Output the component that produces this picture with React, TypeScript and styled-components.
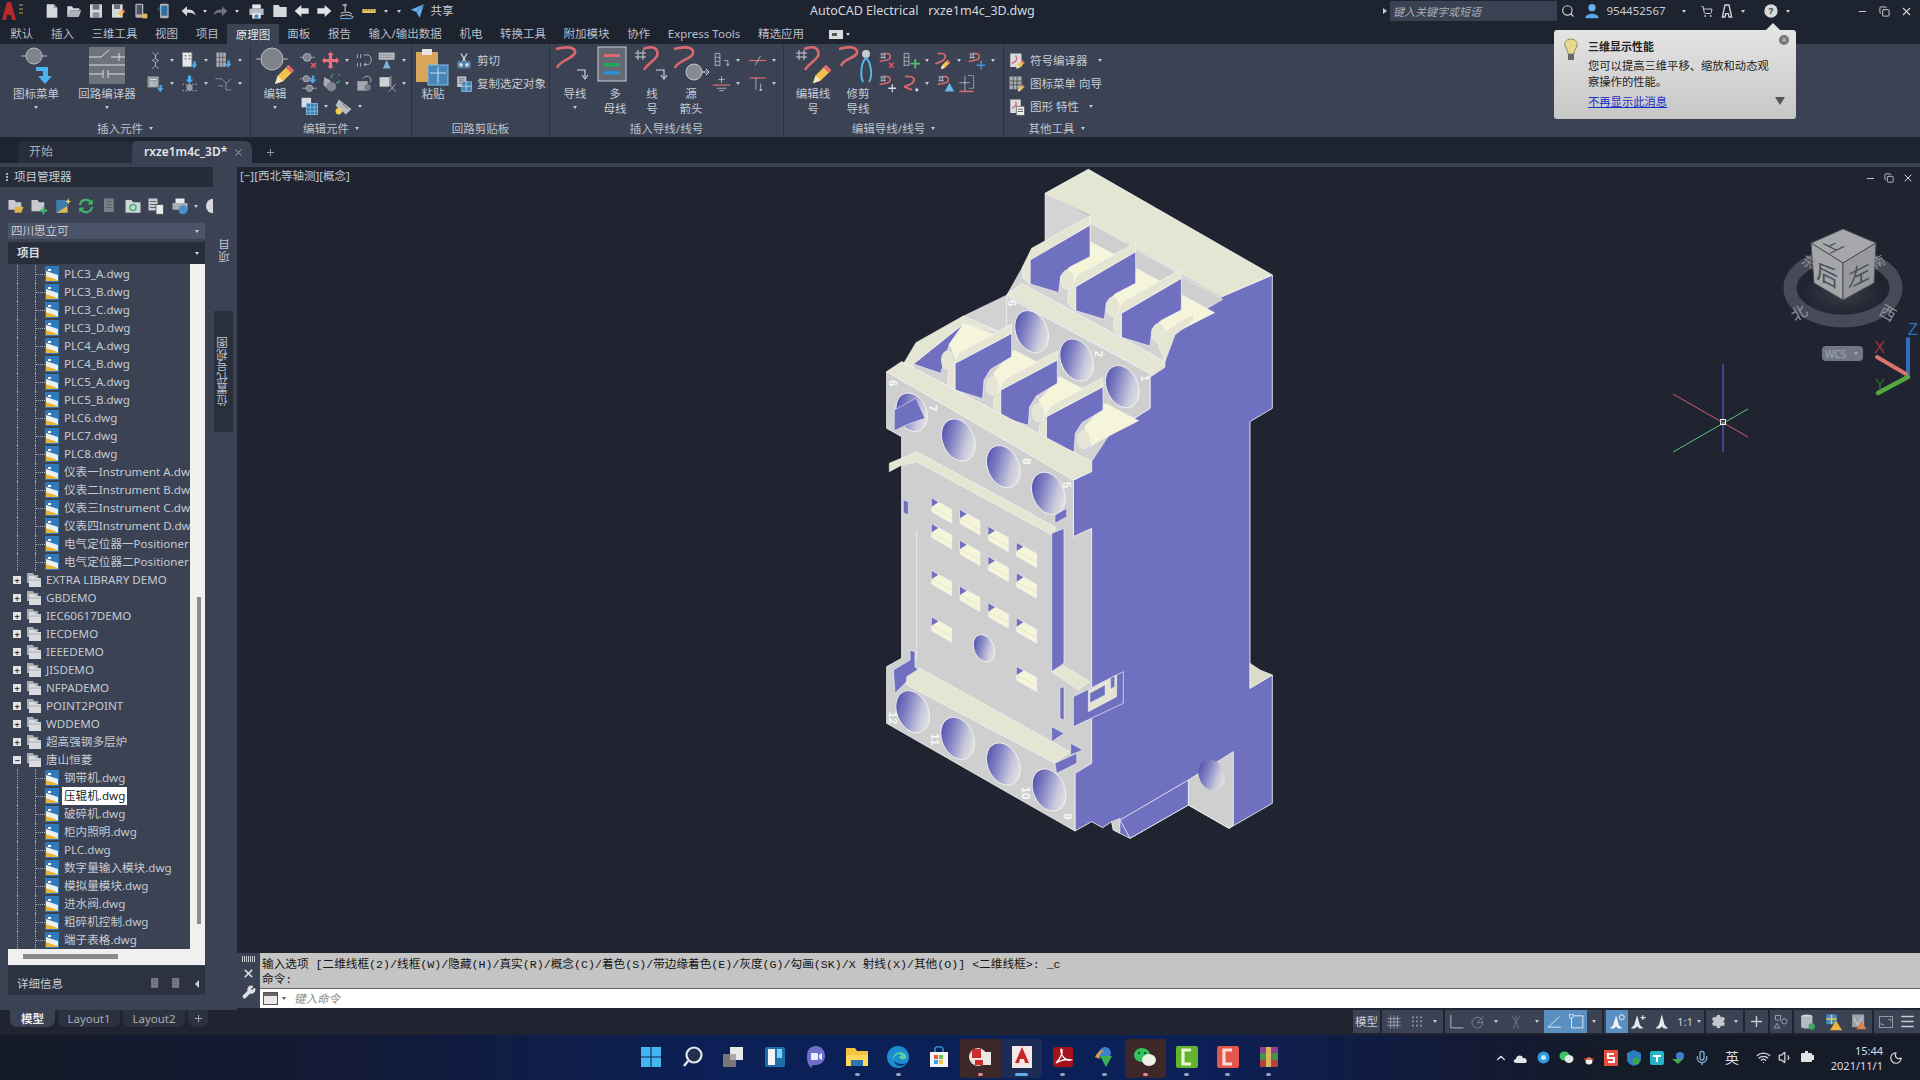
import React from "react";
import styled, { createGlobalStyle } from "styled-components";
import { Settings, Plus, Menu, Search, Wifi, Volume1, Mic, Moon, ChevronUp, Wrench, X as XIcon, Minus, Copy, ShoppingCart } from "lucide-react";

const SANS = `"Noto Sans","Noto Sans CJK SC",sans-serif`;

const Global = createGlobalStyle`
  html, body { margin: 0; padding: 0; width: 1920px; height: 1080px; overflow: hidden; background: #1f2430; }
  * { box-sizing: border-box; }
  #root { width: 1920px; height: 1080px; font-family: ${SANS}; }
`;

const Page = styled.div`display:flex;flex-direction:column;width:1920px;height:1080px;color:#c8ccd3;font-size:11.5px;line-height:1;`;

/* ---------- title bar ---------- */
const TitleBar = styled.header`display:flex;align-items:center;height:22px;background:#1e2330;flex:none;`;
const QuickBar = styled.div`display:flex;align-items:center;width:800px;padding-left:2px;`;
const Qa = styled.span<{ $w?: number }>`display:flex;align-items:center;justify-content:center;width:${p => p.$w ?? 22}px;height:20px;flex:none;`;
const AppTitle = styled.div`width:590px;padding-left:10px;font-size:12.5px;color:#d4d7dc;white-space:pre;`;
const SearchBox = styled.div`width:167px;height:20px;background:#3a4152;display:flex;align-items:center;padding-left:3px;font-size:11px;font-style:italic;color:#a9aeb8;`;
const TitleRight = styled.div`display:flex;align-items:center;flex:1;`;
const TitleItem = styled.span<{ $w: number }>`display:flex;align-items:center;justify-content:center;width:${p => p.$w}px;height:20px;flex:none;`;
const Caret = styled.i<{ $c?: string }>`display:inline-block;width:0;height:0;border-left:2.5px solid transparent;border-right:2.5px solid transparent;border-top:3px solid ${p => p.$c ?? "#c8ccd3"};flex:none;`;
const CaretRight = styled.i`display:block;width:0;height:0;border-top:3.5px solid transparent;border-bottom:3.5px solid transparent;border-left:4px solid #c8ccd3;flex:none;margin:0 3px 0 -7px;`;
const CaretLeft = styled.i`display:block;width:0;height:0;border-top:4px solid transparent;border-bottom:4px solid transparent;border-right:4px solid #d0d3d8;flex:none;margin-left:4px;`;

/* ---------- ribbon ---------- */
const TabRow = styled.nav`display:flex;height:22px;background:#1e2330;padding-left:1.5px;flex:none;align-items:flex-end;`;
const RTab = styled.div<{ $on?: boolean }>`height:${p => p.$on ? 20 : 22}px;display:flex;align-items:center;padding:${p => p.$on ? 1 : 2}px ${p => p.$on ? 8.3 : 8.8}px 0;white-space:nowrap;background:${p => p.$on ? "#3a4254" : "transparent"};color:${p => p.$on ? "#e4e6ea" : "#b9bec7"};`;
const MoreTab = styled(RTab)`padding-left:16px;gap:3px;`;
const Ribbon = styled.section`display:flex;height:93px;background:#3a4254;flex:none;`;
const RPanel = styled.div<{ $w: number; $last?: boolean }>`width:${p => p.$w}px;display:flex;flex-direction:column;flex:none;border-right:${p => p.$last ? "none" : "1px solid #2c3341"};`;
const RBody = styled.div`display:flex;height:76px;padding-top:3px;`;
const RLabel = styled.div`height:17px;display:flex;align-items:center;justify-content:center;gap:6px;font-size:11.5px;color:#bfc4cc;`;
const BigTool = styled.div<{ $w: number }>`width:${p => p.$w}px;flex:none;display:flex;flex-direction:column;align-items:center;line-height:15px;text-align:center;`;
const BigIcon = styled.div`height:38px;display:flex;align-items:center;justify-content:center;margin-bottom:1px;`;
const BigText = styled.div`color:#c8ccd3;font-size:11.5px;white-space:nowrap;`;
const BigCaret = styled.div`height:8px;display:flex;align-items:center;justify-content:center;margin-top:2px;`;
const SmallCol = styled.div<{ $pad?: number; $left?: number }>`display:flex;flex-direction:column;padding-top:${p => p.$pad ?? 0}px;margin-left:${p => p.$left ?? 0}px;`;
const SmallRow = styled.div`display:flex;align-items:center;height:23px;`;
const SmallTool = styled.div<{ $w: number }>`width:${p => p.$w}px;display:flex;align-items:center;justify-content:center;gap:5px;flex:none;`;
const TextTool = styled.div`display:flex;align-items:center;height:23px;gap:4px;white-space:nowrap;padding-left:4px;color:#c8ccd3;`;
const CaretGap = styled.span`width:2px;flex:none;`;

/* ---------- document tabs ---------- */
const DocBar = styled.div`display:flex;align-items:flex-end;height:26px;background:#1e2330;padding-left:18px;flex:none;`;
const DocTab = styled.div<{ $on?: boolean; $w: number }>`width:${p => p.$w}px;height:22px;display:flex;align-items:center;gap:6px;padding-left:${p => p.$on ? 12 : 11}px;border-radius:5px 8px 0 0;background:${p => p.$on ? "#3a4254" : "#272d3a"};color:${p => p.$on ? "#e4e6ea" : "#a8adb6"};font-size:12px;font-weight:${p => p.$on ? 600 : 400};`;
const DocPlus = styled.div`width:36px;height:22px;display:flex;align-items:center;justify-content:center;color:#9ea3ad;`;
const Band = styled.div`height:4px;background:#3a4254;flex:none;`;

/* ---------- main ---------- */
const Main = styled.main`display:flex;height:843px;flex:none;`;
const Side = styled.aside`width:237px;flex:none;background:#3a4254;display:flex;`;
const SideMain = styled.div`width:213px;display:flex;flex-direction:column;flex:none;`;
const SideHead = styled.div`height:20px;background:#272c39;display:flex;align-items:center;padding-left:6px;gap:6px;color:#c8ccd3;font-size:11.5px;`;
const HeadGrip = styled.i`display:block;width:2px;height:8px;background:repeating-linear-gradient(#a7abb4 0 2px,transparent 2px 3px);`;
const SideTools = styled.div`height:32px;display:flex;align-items:center;padding:6px 0 0 7px;gap:5.4px;overflow:hidden;`;
const Project = styled.div`margin:4px 8px 3px;height:16px;background:#4b5469;display:flex;align-items:center;justify-content:space-between;padding:0 6px 0 3px;color:#c8ccd3;font-size:11.5px;`;
const TreeHead = styled.div`margin:0 8px;height:22px;background:#282d3a;display:flex;align-items:center;justify-content:space-between;padding:0 6px 0 9px;font-weight:600;color:#d8dbe0;`;
const TreeWrap = styled.div`margin:0 8px;display:grid;grid-template-columns:182px 15px;grid-template-rows:685px 16px;background:#f0f0f0;height:701px;`;
const TreeBody = styled.div`background:#3a4254;overflow:hidden;padding-top:1px;`;
const VTrack = styled.div`padding:333px 0 0 7px;`;
const VThumb = styled.div`width:4px;height:327px;background:#8a8a8a;`;
const HTrack = styled.div`grid-column:1 / span 2;padding:5px 0 0 15px;`;
const HThumb = styled.div`width:95px;height:5px;background:#8a8a8a;`;
const Row = styled.div`display:flex;align-items:center;height:18px;white-space:nowrap;overflow:hidden;font-size:11.6px;color:#c6cad1;`;
const GuideA = styled.span`width:18px;height:18px;margin-left:9px;border-left:1px dotted #a7abb4;flex:none;`;
const GuideB = styled.span`width:10px;height:18px;border-left:1px dotted #a7abb4;flex:none;background:repeating-linear-gradient(90deg,#a7abb4 0 1px,transparent 1px 2px) 0 9px / 100% 1px no-repeat;`;
const PlusBox = styled.span`width:8px;height:8px;margin-left:5px;margin-right:5px;background:#e2e4e8;color:#30364a;flex:none;display:flex;align-items:center;justify-content:center;font-size:9px;font-weight:700;line-height:1;`;
const FileName = styled.span<{ $sel?: boolean }>`margin-left:${p => p.$sel ? 3 : 5}px;padding:${p => p.$sel ? "3px 2px" : 0};background:${p => p.$sel ? "#fff" : "transparent"};color:${p => p.$sel ? "#1a1a1a" : "inherit"};`;
const FolderName = styled.span`margin-left:4px;`;
const Details = styled.div`margin:1px 8px 0;height:29px;background:#2c3240;display:flex;align-items:center;padding:6px 6px 0 9px;justify-content:space-between;`;
const DetailIcons = styled.div`display:flex;align-items:center;gap:8px;`;
const SideRail = styled.div`width:24px;display:flex;flex-direction:column;align-items:center;padding-top:72px;`;
const VText = styled.div`writing-mode:vertical-rl;transform:rotate(180deg);font-size:11.5px;color:#bfc4cc;`;
const RailTab = styled.div`margin-top:49px;width:19px;height:121px;background:#2a2f3c;display:flex;align-items:center;justify-content:center;margin-right:4px;`;

const View = styled.div`flex:1;display:flex;flex-direction:column;min-width:0;`;
const Canvas = styled.div`height:781px;background:#1f2430;position:relative;overflow:hidden;flex:none;`;
const ViewLabel = styled.div`position:absolute;left:3px;top:3px;font-size:11.5px;color:#c3c7ce;`;
const ViewCtl = styled.div`position:absolute;right:6px;top:5px;display:flex;gap:8px;align-items:center;color:#cfd2d8;`;
const ModelSvg = styled.svg`position:absolute;left:623px;top:-7px;`;
const OverlaySvg = styled.svg`position:absolute;left:1403px;top:33px;`;
const Wcs = styled.div`position:absolute;left:1585px;top:179px;width:41px;height:15px;border-radius:4px;background:#727784;color:#a4a8b2;font-size:10px;display:flex;align-items:center;justify-content:space-between;padding:0 5px 0 3px;`;

const Cmd = styled.div`height:62px;background:#1f2430;padding-top:5px;display:flex;flex:none;`;
const CmdRail = styled.div`width:23px;background:#3a4254;display:flex;flex-direction:column;align-items:center;gap:5px;padding-top:3px;height:55px;`;
const Grip = styled.div`width:14px;height:6px;background:repeating-linear-gradient(90deg,#c8ccd3 0 1px,transparent 1px 2px);`;
const CmdMain = styled.div`flex:1;height:55px;display:flex;flex-direction:column;`;
const CmdHist = styled.div`height:36px;background:#c4c4c4;color:#151515;font-family:"Liberation Mono","Noto Sans CJK SC",monospace;font-size:11.65px;line-height:15px;padding:4px 0 0 2px;white-space:pre;border-bottom:1px solid #666;`;
const CmdInput = styled.div`height:19px;background:#fff;display:flex;align-items:center;gap:4px;padding-left:3px;font-style:italic;color:#8c8c8c;font-size:11.5px;`;
const CmdHint = styled.span`margin-left:4px;`;

/* ---------- status ---------- */
const Status = styled.footer`height:25px;flex:none;background:#1f2430;display:flex;padding-left:10px;align-items:flex-start;`;
const LTab = styled.div<{ $w: number; $on?: boolean }>`width:${p => p.$w}px;margin-right:3px;height:17px;display:flex;align-items:center;justify-content:center;border-radius:0 0 7px 7px;background:${p => p.$on ? "#3a4254" : "#2b313f"};color:${p => p.$on ? "#e6e8eb" : "#a8adb6"};font-weight:${p => p.$on ? 600 : 400};`;
const StatusTools = styled.div`margin-left:auto;display:flex;gap:2px;height:23px;`;
const SGroup = styled.div<{ $w: number; $flow?: boolean }>`width:${p => p.$w}px;background:#3a4254;display:flex;align-items:center;justify-content:${p => p.$flow ? "flex-start" : "space-around"};padding:0 ${p => p.$flow ? 0 : 1}px;color:#c8ccd3;flex:none;`;
const SBtn = styled.span<{ $on?: boolean; $w?: number }>`width:${p => p.$w ?? 21}px;height:23px;display:flex;align-items:center;justify-content:center;background:${p => p.$on ? "#5a8fc2" : "transparent"};flex:none;`;

/* ---------- taskbar ---------- */
const Taskbar = styled.div`height:45px;flex:none;display:grid;grid-template-columns:1fr 659px 1fr;background:linear-gradient(90deg,#141a28 0%,#121a36 18%,#0c2058 38%,#0c2058 62%,#121a36 76%,#161b28 84%);`;
const TaskItems = styled.div`display:flex;`;
const TaskItem = styled.div<{ $tone?: string }>`width:41.2px;display:flex;flex-direction:column;align-items:center;background:${p => p.$tone ?? "transparent"};margin-top:4px;height:39px;border-radius:3px;padding-top:6px;`;
const TaskDot = styled.i<{ $c?: string; $w?: number }>`display:block;width:${p => p.$w ?? 5}px;height:3px;border-radius:2px;background:${p => p.$c ?? "#93a2b8"};margin-top:4px;`;
const Tray = styled.div`display:flex;align-items:center;justify-content:flex-end;padding-right:15px;color:#d9dce2;`;
const TrayItem = styled.span<{ $w?: number; $big?: boolean }>`width:${p => p.$w ?? 22.6}px;display:flex;justify-content:center;align-items:center;font-size:${p => p.$big ? 14 : 11.5}px;`;
const Clock = styled.div`display:flex;flex-direction:column;align-items:flex-end;font-size:11px;gap:4px;width:64px;margin-right:4px;`;

/* ---------- popup ---------- */
const Popup = styled.div`position:absolute;left:1554px;top:30px;width:242px;height:89px;background:linear-gradient(#e4e4e4,#c6c6c6);border-radius:3px;color:#222;padding:11px 0 0 34px;font-size:11.3px;z-index:5;
  &::before{content:"";position:absolute;left:212px;top:-7px;border-left:7px solid transparent;border-right:7px solid transparent;border-bottom:7px solid #e4e4e4;}`;
const PopTitle = styled.div`font-size:11px;font-weight:600;margin-bottom:6px;`;
const PopText = styled.div`line-height:15.5px;width:184px;`;
const PopLink = styled.div`color:#1a30c8;text-decoration:underline;margin-top:7px;`;
const PopBulb = styled.svg`position:absolute;left:10px;top:8px;`;
const PopClose = styled.span`position:absolute;right:7px;top:5px;width:10px;height:10px;border-radius:50%;background:#777;color:#ddd;font-size:8px;display:flex;align-items:center;justify-content:center;`;
const PopMore = styled.span`position:absolute;right:11px;bottom:14px;border-left:5px solid transparent;border-right:5px solid transparent;border-top:8px solid #555;`;

/* ---------- icons ---------- */
const pink = "#d8696f";
const Comp = ({ cx = 14, cy = 12, r = 9 }: any) => (<g><path d={`M${cx - r - 5} ${cy}H${cx + r + 5}`} stroke="#b8bcc2" strokeWidth="1" /><circle cx={cx} cy={cy} r={r} fill="#7f838c" stroke="#b9bcc2" strokeWidth="1" /></g>);
const WireP = ({ d = "M4 20 C5 12 22 14 20 6 C19 1 10 2 3 4" }: any) => <path d={d} fill="none" stroke={pink} strokeWidth="2.6" />;
const Pencil = ({ x = 0, y = 0, s = 1 }: any) => (<g transform={`translate(${x} ${y}) scale(${s})`}><path d="M0 14 L2 8 L10 0 L14 4 L6 12Z" fill="#f2c14e" /><path d="M10 0 L14 4 L12 6 L8 2Z" fill="#e3656a" /><path d="M0 14 L2 8 L6 12Z" fill="#f3e6c2" /></g>);
const W = "#c2c6cd";

const glyphs: Record<string, React.ReactNode> = {
  menuBig: <g><Comp cx={18} cy={10} r={8} /><path d="M20 21H32V30H36L29 38 22 30H27V25H20Z" fill="#4db3ef" /></g>,
  circuit: <g><rect x="2" y="1" width="36" height="37" fill="#6f737b" /><path d="M2 19H38M2 11H14L22 4M24 11H38M32 7V15M2 28H16M16 24V32M21 24V32M21 28H38" stroke="#dcdde0" strokeWidth="1" fill="none" /></g>,
  editBig: <g><Comp cx={17} cy={13} r={11} /><Pencil x={20} y={19} s={1.35} /></g>,
  clip: <g><rect x="3" y="6" width="22" height="30" fill="#d9a55b" /><rect x="9" y="3" width="10" height="6" fill="#e5e5e5" /><rect x="15" y="19" width="20" height="20" fill="#4a86b5" stroke="#7cc0ee" /><path d="M17 27H33M25 21V37" stroke="#bfe2f8" /></g>,
  wire: <g><WireP d="M2 22 C4 14 22 12 20 5 C18 0 8 1 1 3" /><path d="M22 24H30V31M27 29L30 33 33 29" stroke="#d8dbe0" fill="none" strokeWidth="1.1" /></g>,
  bus: <g><rect x="3" y="1" width="28" height="34" fill="#646973" stroke="#c8ccd3" /><rect x="9" y="8" width="16" height="3" fill={pink} /><rect x="9" y="17" width="16" height="3.5" fill="#27a559" /><rect x="9" y="25" width="16" height="3.5" fill="#2f8ed6" /></g>,
  wireNo: <g><path d="M6 4V14M11 4V14M3 7H14M3 11H14" stroke="#c8ccd3" /><WireP d="M12 24 C16 16 28 13 25 5 C23 0 16 1 11 3" /><path d="M24 24H32V31M29 29L32 33 35 29" stroke="#d8dbe0" fill="none" strokeWidth="1.1" /></g>,
  source: <g><WireP d="M4 22 C6 14 24 13 22 5 C20 0 10 1 3 3" /><circle cx="23" cy="26" r="8" fill="#868a92" stroke="#c6c9ce" /><path d="M31 26H36M35 23L38 26 35 29" stroke="#e6e8eb" fill="none" /></g>,
  editWire: <g><path d="M6 4V14M11 4V14M3 7H14M3 11H14" stroke="#c8ccd3" /><WireP d="M12 24 C16 16 28 13 25 5 C23 0 16 1 11 3" /><Pencil x={20} y={19} s={1.3} /></g>,
  trim: <g><WireP d="M3 20 C5 12 21 12 19 5 C17 0 8 1 1 3" /><circle cx="28" cy="8" r="4" fill="#c9ccd1" /><path d="M28 12C23 16 22 30 25 36M28 12C33 16 35 30 31 36" stroke="#5bb4ea" strokeWidth="2" fill="none" /></g>,
  /* small */
  coil: <g><path d="M8 2C16 6 8 9 16 12 8 15 16 18 8 22M16 2C8 6 16 9 8 12 16 15 8 18 16 22" stroke={W} fill="none" /></g>,
  panelB: <g><rect x="3" y="2" width="12" height="18" fill="#e5e6e8" stroke="#888" /><path d="M6 6H8M11 6H13M6 10H8M11 10H13" stroke="#333" /><path d="M17 13H20V17H22L18 22 14 17H17Z" fill="#4da9e8" /></g>,
  blockB: <g><rect x="3" y="2" width="12" height="18" fill="#a8abb2" /><path d="M7 2V20M11 2V20M3 8H15M3 14H15" stroke="#444" strokeWidth=".8" /><path d="M17 12H20V16H22L18 21 14 16H17Z" fill="#4da9e8" /></g>,
  tableB: <g><rect x="2" y="3" width="14" height="14" fill="#9aa0a8" /><path d="M5 7H13M5 11H9M11 11H14M5 14H13" stroke="#eee" /><path d="M17 14H20V18H22L18 23 14 18H17Z" fill="#4da9e8" /></g>,
  nodeB: <g><path d="M10 2H14V7H17L12 12 7 7H10Z" fill="#4da9e8" /><circle cx="12" cy="17" r="4" fill="#9a9da4" /><path d="M3 13H21M3 21H21" stroke={W} strokeDasharray="2 2" /></g>,
  branch: <g><path d="M2 6H10L15 12V20H22M15 12L22 6M6 15H11" stroke={W} fill="none" strokeDasharray="2 1" /></g>,
  compX: <g><Comp cx={9} cy={8} r={5} /><path d="M14 15L20 21M20 15L14 21" stroke="#d8565c" strokeWidth="2.2" /></g>,
  move: <g><path d="M12 1L16 5H14V10H19V8L23 12 19 16V14H14V19H16L12 23 8 19H10V14H5V16L1 12 5 8V10H10V5H8Z" fill="#e9707a" /></g>,
  swap: <g><path d="M3 4V9M7 4V9M3 15V20M7 15V20M11 5H16C22 5 22 17 16 17H12M14 15L11 17 14 19" stroke={W} fill="none" /></g>,
  cone: <g><rect x="1" y="2" width="20" height="9" fill="#bcbfc5" /><path d="M3 5H19M3 8H19" stroke="#555" strokeDasharray="2 1" /><path d="M11 11L16 22H6Z" fill="#79aed6" /></g>,
  nodes: <g><Comp cx={8} cy={6} r={4} /><path d="M15 2H18V7H21L16 12 11 7H15Z" fill="#4da9e8" /><Comp cx={12} cy={18} r={4} /></g>,
  rotate: <g><path d="M4 4L12 8 10 20 3 14Z" fill="#a9adb4" /><circle cx="13" cy="16" r="6" fill="#82868e" /><path d="M13 5A6 6 0 1 1 19 11" stroke="#3cb46a" fill="none" strokeWidth="1.6" /></g>,
  arcTool: <g><rect x="3" y="9" width="13" height="12" fill="#a4a7ae" /><circle cx="16" cy="17" r="4" fill="#787c84" /><path d="M10 6C13 1 21 2 20 9L19 11" stroke={W} fill="none" /></g>,
  cubeX: <g><path d="M2 4H14V16H2Z" fill="#cfd1d5" /><path d="M14 4L17 2V13L14 16Z" fill="#8c9097" /><path d="M14 13L22 22M22 13L14 22" stroke="#c8ccd3" /></g>,
  tableBlue: <g><rect x="2" y="1" width="12" height="12" fill="#d9dbde" /><rect x="8" y="8" width="14" height="14" fill="#3f7fae" stroke="#82c3ee" /><path d="M8 13H22M8 18H22M13 8V22M18 8V22" stroke="#a4d5f5" strokeWidth=".7" /></g>,
  tag: <g><path d="M6 3L22 15 15 22 2 11Z" fill="#b9bcc2" /><circle cx="6" cy="18" r="4" fill="#f1cd55" /><path d="M10 8L18 15" stroke="#555" /></g>,
  scissors: <g><path d="M8 2L14 12M16 2L10 12" stroke="#e6e8eb" strokeWidth="1.5" /><rect x="3" y="12" width="18" height="10" rx="2" fill="#4f7fa6" /><circle cx="8" cy="17" r="2.5" fill="#d9dbde" /><circle cx="16" cy="17" r="2.5" fill="#d9dbde" /></g>,
  copySel: <g><rect x="3" y="2" width="12" height="14" fill="#c5c8cd" /><path d="M5 5H13M5 8H13M5 11H13" stroke="#444" /><rect x="9" y="9" width="13" height="13" fill="#4a86b5" stroke="#8ac8f0" /><path d="M9 15H22M15 9V22" stroke="#bfe2f8" /></g>,
  lineCol: <g><path d="M4 3V19M10 3V19M4 3H10M4 8H10M4 13H10M4 18H10" stroke={W} fill="none" /><path d="M15 12H20V18M18 16L20 19 22 16" stroke={W} fill="none" /></g>,
  gapWire: <g><path d="M1 12H23" stroke={pink} strokeWidth="1.6" /><path d="M9 18L16 6" stroke={W} /></g>,
  earth: <g><path d="M12 3V11M8 7H16" stroke={W} /><path d="M1 14H23" stroke={pink} strokeWidth="1.6" /><path d="M6 18H18M9 21H15" stroke={W} /></g>,
  tee: <g><path d="M2 5H22" stroke={pink} strokeWidth="1.6" /><path d="M10 5V20M16 12V18" stroke={W} /><circle cx="16" cy="20" r="1.6" fill={W} /></g>,
  noX: <g><path d="M3 4H10M3 8H10M5 2V10M8 2V10" stroke={W} /><path d="M2 13C8 12 18 12 15 5 14 3 12 3 9 3" stroke={pink} strokeWidth="2" fill="none" /><path d="M14 15L20 21M20 15L14 21" stroke="#d8565c" strokeWidth="2" /></g>,
  lineAdd: <g><path d="M4 3V19M10 3V19M4 3H10M4 8H10M4 13H10M4 18H10" stroke={W} fill="none" /><path d="M18 10V22M12 16H24" stroke="#4fc06a" strokeWidth="2.4" /></g>,
  wirePen: <g><path d="M3 16C9 14 17 12 15 5 14 3 10 3 6 3" stroke={pink} strokeWidth="2.2" fill="none" /><Pencil x={10} y={11} s={.85} /></g>,
  noBlue: <g><path d="M3 4H10M3 8H10M5 2V10M8 2V10" stroke={W} /><path d="M2 13C8 12 18 12 15 5 14 3 12 3 9 3" stroke={pink} strokeWidth="2" fill="none" /><path d="M18 12V23M12 18H23" stroke="#4b90d0" strokeWidth="2" /></g>,
  noPlus: <g><path d="M3 4H10M3 8H10M5 2V10M8 2V10" stroke={W} /><path d="M2 13C8 12 18 12 15 5 14 3 12 3 9 3" stroke={pink} strokeWidth="2" fill="none" /><path d="M18 13V23M13 18H23" stroke="#d8dbe0" strokeWidth="1.6" /></g>,
  wireDot: <g><path d="M4 16C10 14 18 12 16 5 15 3 11 3 5 3" stroke={pink} strokeWidth="2.4" fill="none" /><path d="M4 16L14 20" stroke={pink} strokeWidth="2.4" /><circle cx="20" cy="20" r="2" fill="#d8dbe0" /></g>,
  noTri: <g><path d="M3 4H10M3 8H10M5 2V10M8 2V10" stroke={W} /><path d="M2 13C8 12 18 12 15 5 14 3 12 3 9 3" stroke={pink} strokeWidth="2" fill="none" /><path d="M17 11L23 22H11Z" fill="#6bb5e3" /></g>,
  ladder: <g><path d="M3 22H21" stroke={pink} strokeWidth="2" /><path d="M14 2H21V18H14" stroke="#d8dbe0" fill="none" strokeDasharray="2 1" /><path d="M10 2V22M3 11H16" stroke={W} /></g>,
  symEdit: <g><rect x="3" y="2" width="15" height="18" fill="#d8dadd" /><path d="M5 15C10 13 14 10 10 5" stroke={pink} strokeWidth="1.8" fill="none" /><Pencil x={11} y={11} s={.8} /></g>,
  wizard: <g><rect x="2" y="2" width="16" height="17" fill="#a9acb3" /><path d="M7 2V19M12 2V19M2 8H18M2 13H18" stroke="#333" strokeWidth=".9" /><Pencil x={13} y={13} s={.65} /></g>,
  props: <g><rect x="3" y="2" width="14" height="18" fill="#dcdde0" /><path d="M5 14C9 12 13 9 10 5" stroke={pink} strokeWidth="1.8" fill="none" /><rect x="11" y="11" width="11" height="12" fill="#f1f1f1" stroke="#555" /><path d="M13 15H20M13 18H20" stroke="#333" /></g>,
  /* title */
  newf: <g><path d="M4 2H15L20 7V22H4Z" fill="#d4d7dc" /><path d="M15 2V7H20" fill="#8b8f97" /></g>,
  open: <g><path d="M2 5H9L11 8H20V11H7L3 21H2Z" fill="#d4d7dc" /><path d="M7 11H23L19 21H3Z" fill="#aeb2b9" /></g>,
  save: <g><path d="M3 2H21V22H3Z" fill="#d4d7dc" /><rect x="7" y="2" width="10" height="8" fill="#6b7079" /><rect x="7" y="14" width="10" height="8" fill="#8b8f97" /></g>,
  saveas: <g><path d="M3 2H19V22H3Z" fill="#d4d7dc" /><rect x="6" y="2" width="9" height="7" fill="#6b7079" /><Pencil x={10} y={9} s={.9} /></g>,
  phone1: <g><rect x="5" y="1" width="12" height="21" rx="2" fill="#aeb2b9" /><rect x="7" y="3" width="8" height="14" fill="#4b5262" /><path d="M15 16H23V23H15Z" fill="#e3b34d" /></g>,
  phone2: <g><rect x="6" y="1" width="13" height="22" rx="2" fill="#aeb2b9" /><rect x="8" y="4" width="9" height="15" fill="#2d6f9e" /><path d="M2 9H8M5 6L8 9 5 12" stroke="#4da9e8" fill="none" /></g>,
  undo: <path d="M9 5V10C15 9 21 12 22 19 19 15 15 14 9 15V20L1 12Z" fill="#d4d7dc" />,
  redo: <path d="M15 5V10C9 9 3 12 2 19 5 15 9 14 15 15V20L23 12Z" fill="#6d727c" />,
  print: <g><rect x="6" y="2" width="12" height="6" fill="#e6e8eb" /><rect x="2" y="8" width="20" height="9" fill="#b6bac1" /><rect x="6" y="14" width="12" height="8" fill="#e6e8eb" /><circle cx="12" cy="19" r="3" fill="#4a8fc6" /></g>,
  folder: <path d="M2 3H10L12 6H22V21H2Z" fill="#d4d7dc" />,
  left: <path d="M11 3V8H22V16H11V21L1 12Z" fill="#e0e2e6" />,
  right: <path d="M13 3V8H2V16H13V21L23 12Z" fill="#e0e2e6" />,
  snake: <g><path d="M10 1V12M6 3H13M4 15C8 12 16 12 20 16M3 19C8 16 16 16 22 20" stroke="#d4d7dc" fill="none" strokeWidth="1.4" /><path d="M3 22H21" stroke="#5db6ea" strokeWidth="1.4" /></g>,
  ruler: <g><rect x="2" y="9" width="20" height="6" fill="#e8c65f" /><path d="M6 9V12M10 9V12M14 9V12M18 9V12" stroke="#444" /></g>,
  send: <path d="M23 1L16 23 11 14 2 10ZM23 1L11 14" fill="#5fb3ee" stroke="#1e2330" strokeWidth=".7" />,
  user: <g><circle cx="12" cy="7" r="5.5" fill="#6ab0ea" /><path d="M2 23C2 14 22 14 22 23Z" fill="#5da5e4" /></g>,
  aLogo: <g><path d="M9 3L15 3 19 21H15L14 16H10L9 21H5Z" fill="none" stroke="#d4d7dc" strokeWidth="2" /></g>,
  help: <g><circle cx="12" cy="12" r="10" fill="#d6d8dc" /><text x="12" y="16.5" textAnchor="middle" fontSize="13" fontWeight="700" fill="#333" fontFamily="Liberation Sans">?</text></g>,
  /* panel */
  pFolderOpen: <g><path d="M2 4H10L12 7H19V17H2Z" fill="#c7cad0" /><path d="M10 13H22L19 21H10Z" fill="#e3b34d" /></g>,
  pFolderAdd: <g><path d="M2 4H10L12 7H19V19H2Z" fill="#c7cad0" /><path d="M18 13V23M13 18H23" stroke="#43b86b" strokeWidth="2.4" /></g>,
  pStar: <g><rect x="3" y="4" width="15" height="17" fill="#3f7fae" /><path d="M3 21L18 12V21Z" fill="#e3b34d" /><path d="M19 1L20 5 23 6 20 7 19 11 18 7 15 6 18 5Z" fill="#f5d76a" /></g>,
  pRefresh: <g><path d="M4 11A8 8 0 0 1 19 8M20 13A8 8 0 0 1 5 16" stroke="#3fb56c" strokeWidth="3" fill="none" /><path d="M21 3V10H14Z M3 21V14H10Z" fill="#3fb56c" /></g>,
  pDoc: <g><rect x="4" y="2" width="13" height="18" fill="#7a7e87" /><path d="M7 6H14M7 10H14M7 14H14" stroke="#50545c" /></g>,
  pFolderRef: <g><path d="M2 4H10L12 7H22V21H2Z" fill="#d0d3d8" /><circle cx="12" cy="14" r="4" fill="none" stroke="#3fb56c" strokeWidth="2" /></g>,
  pDocs: <g><rect x="2" y="2" width="12" height="16" fill="#c7cad0" /><path d="M4 6H12M4 10H12M4 14H12" stroke="#444" /><rect x="12" y="10" width="10" height="13" fill="#e9eaec" stroke="#444" /></g>,
  pPrint: <g><rect x="6" y="2" width="12" height="6" fill="#e6e8eb" /><rect x="2" y="8" width="20" height="9" fill="#a9adb4" /><circle cx="16" cy="17" r="6" fill="#4a8fc6" /></g>,
  warn: <g><rect x="3" y="2" width="14" height="13" fill="#3f8ac6" /><path d="M3 8H17M10 2V15" stroke="#e8c65f" strokeWidth="2" /><path d="M16 10L24 23H8Z" fill="#efb43c" /></g>,
  chart: <g><rect x="3" y="2" width="17" height="18" fill="#9da1a9" /><path d="M5 6L11 17 17 6" stroke="#e6e8eb" fill="none" /><path d="M16 11L23 23H9Z" fill="#d9824e" /></g>,
  symsIcon: <g><rect x="4" y="2" width="7" height="7" fill="none" stroke={W} /><circle cx="17" cy="11" r="4" fill="none" stroke={W} /><path d="M6 14L10 21H2Z" fill="none" stroke={W} /></g>,
  expand: <g><rect x="2" y="4" width="20" height="16" fill="none" stroke={W} /><path d="M5 16H9M5 16V13M19 8H15M19 8V11" stroke={W} /></g>,
  ortho: <path d="M4 3V21H22" stroke={W} fill="none" strokeWidth="1.2" />,
  polar: <g><circle cx="11" cy="13" r="8" fill="none" stroke="#9a9ea6" /><path d="M11 13L20 3M11 13H19" stroke="#9a9ea6" /></g>,
  snap: <path d="M12 2L12 9M6 3L12 12 8 22M18 3L12 12 16 22" stroke="#888c94" fill="none" />,
  iso: <path d="M3 20H21M3 20L19 5" stroke="#e6edf5" fill="none" strokeWidth="1.3" />,
  square: <g><rect x="5" y="4" width="16" height="17" fill="none" stroke="#e6edf5" strokeWidth="1.3" /><rect x="2" y="2" width="5" height="5" fill="#5a8fc2" stroke="#e6edf5" /></g>,
  anno: <path d="M11 2L15 17 20 22H14L11 19 8 22H2L7 17Z" fill="#e6e8eb" />,
  anno1: <g><path d="M10 3L14 17 19 22H13L10 19 7 22H1L6 17Z" fill="#eef1f4" /><circle cx="18" cy="6" r="3.5" fill="none" stroke="#eef1f4" strokeWidth="1.4" /></g>,
  anno2: <g><path d="M10 3L14 17 19 22H13L10 19 7 22H1L6 17Z" fill="#e6e8eb" /><path d="M18 3V10M15 6.5H22" stroke="#e6e8eb" strokeWidth="1.6" /></g>,
  dbOk: <g><ellipse cx="11" cy="5" rx="8" ry="3" fill="#d4d7dc" /><path d="M3 5V19C3 23 19 23 19 19V5" fill="#b5b9c0" /><circle cx="18" cy="19" r="4.5" fill="#3fa760" /></g>,
  halfDisc: <circle cx="14" cy="12" r="11" fill="#d6d8dc" />,
  gridLines: <path d="M7 2V22M12 2V22M17 2V22M2 7H22M2 12H22M2 17H22" stroke="#c2c6cd" fill="none" />,
  gridDots: <path d="M4 4H6M11 4H13M18 4H20M4 11H6M11 11H13M18 11H20M4 18H6M11 18H13M18 18H20" stroke="#c2c6cd" strokeWidth="3" fill="none" />,
};
const Ico = ({ k, s = 20, box = 24 }: { k: string; s?: number; box?: number }) => (
  <svg width={s} height={s} viewBox={`0 0 ${box} ${box}`} style={{ flex: "none", display: "block" }}>{glyphs[k]}</svg>
);

const Sm = ({ k, w, caret }: { k: string; w: number; caret?: boolean }) => (
  <SmallTool $w={w}><Ico k={k} s={19} />{caret && <Caret />}</SmallTool>
);
const Big = ({ k, w, lines, caret, box = 40, s = 40 }: { k: string; w: number; lines: string[]; caret?: boolean; box?: number; s?: number }) => (
  <BigTool $w={w}>
    <BigIcon><Ico k={k} s={s} box={box} /></BigIcon>
    {lines.map(l => <BigText key={l}>{l}</BigText>)}
    {caret && <BigCaret><Caret /></BigCaret>}
  </BigTool>
);

const tabs = ["默认", "插入", "三维工具", "视图", "项目", "原理图", "面板", "报告", "输入/输出数据", "机电", "转换工具", "附加模块", "协作", "Express Tools", "精选应用"];

const files1 = ["PLC3_A.dwg", "PLC3_B.dwg", "PLC3_C.dwg", "PLC3_D.dwg", "PLC4_A.dwg", "PLC4_B.dwg", "PLC5_A.dwg", "PLC5_B.dwg", "PLC6.dwg", "PLC7.dwg", "PLC8.dwg", "仪表一Instrument A.dwg", "仪表二Instrument B.dwg", "仪表三Instrument C.dwg", "仪表四Instrument D.dwg", "电气定位器一Positioner", "电气定位器二Positioner"];
const folders = ["EXTRA LIBRARY DEMO", "GBDEMO", "IEC60617DEMO", "IECDEMO", "IEEEDEMO", "JISDEMO", "NFPADEMO", "POINT2POINT", "WDDEMO", "超高强钢多层炉", "唐山恒菱"];
const files2 = ["钢带机.dwg", "压辊机.dwg", "破碎机.dwg", "柜内照明.dwg", "PLC.dwg", "数字量输入模块.dwg", "模拟量模块.dwg", "进水阀.dwg", "粗碎机控制.dwg", "端子表格.dwg"];

const FileIcon = () => (
  <svg width="14" height="16" viewBox="0 0 14 16" style={{ flex: "none" }}>
    <rect x=".5" y=".5" width="13" height="15" fill="#e8eef5" stroke="#2f79bd" />
    <path d="M1 1H13V9L1 5Z" fill="#2f79bd" />
    <path d="M1 10L13 14V15H1Z" fill="#e9b233" />
    <path d="M1 7L13 11V14L1 10Z" fill="#f0f0e8" />
    <rect x="3" y="3" width="3" height="2" fill="#fff" />
  </svg>
);
const FolderIcon = () => (
  <svg width="16" height="16" viewBox="0 0 16 16" style={{ flex: "none" }}>
    <path d="M1 1H7L8 3H12V11H1Z" fill="#a9adb4" />
    <path d="M3 4H9L10 6H15V15H3Z" fill="#d9dbdf" />
    <path d="M3 8H15" stroke="#a9adb4" />
  </svg>
);
const FileRow = ({ name, sel }: { name: string; sel?: boolean }) => (
  <Row><GuideA /><GuideB /><FileIcon /><FileName $sel={sel}>{name}</FileName></Row>
);
const FolderRow = ({ name, open }: { name: string; open?: boolean }) => (
  <Row><PlusBox>{open ? "−" : "+"}</PlusBox><FolderIcon /><FolderName>{name}</FolderName></Row>
);

/* ---------- 3-D model (coordinates in 1/3 px) ---------- */
const P = "#7070c0", C = "#e5e5d3", G = "#cfcfcf", Y = "#f5f5da", E = "#f4f4f4";
const poly = (pts: number[], fill: string, sw = 2.5) => (
  <polygon points={pts.join(",")} fill={fill} stroke={E} strokeWidth={sw} strokeLinejoin="round" />
);
const Hole = ({ x, y, rx = 47, ry = 66 }: { x: number; y: number; rx?: number; ry?: number }) => (
  <ellipse cx={x} cy={y} rx={rx} ry={ry} transform={`rotate(-24 ${x} ${y})`} fill="url(#hole)" stroke={E} strokeWidth="2.5" />
);
const Slot = ({ x, y }: { x: number; y: number }) => (
  <g>
    <polygon points={`${x},${y} ${x + 60},${y + 33} ${x + 60},${y + 75} ${x},${y + 40}`} fill={Y} stroke={E} strokeWidth="2" />
    <path d={`M${x} ${y + 26}L${x + 60} ${y + 58}`} stroke="#d8d8c0" strokeWidth="1.5" />
    <polygon points={`${x},${y} ${x + 20},${y + 12} ${x},${y + 25}`} fill={P} />
  </g>
);
const UpperFin = ({ i }: { i: number }) => {
  const dx = 137 * i, dy = 80 * i;
  const s = (a: number[]) => a.map((v, n) => n % 2 ? v + dy : v + dx);
  return (
    <g>
      {poly(s([690, 190, 815, 258, 760, 290, 690, 245]), "#cfcfd0", 1.5)}
      {poly(s([618, 318, 694, 246, 790, 298, 645, 372]), Y, 1.5)}
      {poly(s([510, 300, 690, 195, 690, 290, 628, 322, 602, 348, 596, 398, 510, 372]), P, 2)}
      {poly(s([487, 322, 515, 265, 690, 168, 690, 195, 510, 300, 510, 372, 487, 352]), C, 2)}
      <ellipse cx={622 + dx} cy={360 + dy} rx={20} ry={30} fill={C} stroke={E} strokeWidth="1.5" />
    </g>
  );
};
const LowerFin = ({ i }: { i: number }) => {
  const dx = 137 * i, dy = 80 * i;
  const s = (a: number[]) => a.map((v, n) => n % 2 ? v + dy : v + dx);
  return (
    <g>
      {poly(s([400, 640, 462, 570, 562, 622, 420, 695]), Y, 1.5)}
      {poly(s([285, 610, 455, 520, 455, 590, 392, 628, 372, 660, 368, 716, 285, 690]), P, 2)}
      {poly(s([264, 638, 298, 578, 455, 492, 455, 520, 285, 610, 285, 690, 264, 676]), C, 2)}
      <ellipse cx={398 + dx} cy={678 + dy} rx={19} ry={28} fill={C} stroke={E} strokeWidth="1.5" />
    </g>
  );
};
const Num = ({ x, y, t, r = 90 }: { x: number; y: number; t: string; r?: number }) => (
  <text x={x} y={y} transform={`rotate(${r} ${x} ${y})`} fill="#fafafa" fontSize="34" fontFamily="Liberation Sans" fontWeight="700">{t}</text>
);

const Model = () => (
  <ModelSvg width="440" height="690" viewBox="0 0 1320 2070">
    <defs>
      <linearGradient id="hole" x1="0.1" y1="0.05" x2="0.9" y2="0.95">
        <stop offset="0" stopColor="#4a4aa8" />
        <stop offset="0.35" stopColor="#8080c4" />
        <stop offset="0.7" stopColor="#c8c8dc" />
        <stop offset="1" stopColor="#ecece0" />
      </linearGradient>
    </defs>
    {/* side */}
    {poly([1237, 345, 1237, 745, 1170, 785, 1170, 1585, 1237, 1545, 1237, 1930, 1107, 2005, 985, 1935, 810, 2035, 760, 2010, 755, 1985, 728, 2003, 695, 1985, 645, 2013, 640, 960, 690, 935, 690, 860, 870, 745, 870, 640, 915, 605, 920, 520, 1085, 410], P)}
    {poly([1170, 1585, 1237, 1545, 1200, 1530, 1170, 1510], "#dcdcc8", 2)}
    {poly([985, 1860, 1120, 1775, 1120, 1995, 1107, 2005, 985, 1935], G)}
    <ellipse cx="1055" cy="1845" rx="38" ry="48" transform="rotate(-24 1055 1845)" fill="url(#hole)" />
    {poly([780, 1980, 985, 1860, 985, 1935, 810, 2035], P)}
    {poly([755, 1985, 780, 1975, 780, 2020, 760, 2010], G, 1.5)}
    {/* front silhouette */}
    {poly([80, 635, 80, 805, 125, 830, 125, 1495, 80, 1520, 80, 1690, 645, 2013, 645, 1840, 695, 1810, 695, 1105, 640, 1130, 640, 960, 690, 935, 690, 860, 270, 620], G)}
    {/* top */}
    {poly([555, 100, 690, 168, 690, 190, 555, 255], "#d4d4d4", 1.5)}
    {poly([685, 28, 1237, 345, 1085, 410, 690, 190, 690, 165, 555, 100], C)}
    {poly([487, 322, 690, 190, 1085, 410, 920, 520, 915, 605, 440, 405], "#d2d2d2", 1)}
    <UpperFin i={0} /><UpperFin i={1} /><UpperFin i={2} />
    {poly([895, 560, 905, 520, 945, 495, 1000, 462, 1000, 480, 945, 525, 915, 605], C, 1.5)}
    {/* lower backing */}
    {poly([130, 612, 310, 468, 440, 405, 870, 640, 695, 905, 125, 605], "#d2d2d2", 1)}
    {/* upper plate */}
    {poly([440, 410, 870, 640, 870, 745, 690, 860, 440, 620], G)}
    <Hole x={515} y={515} /><Hole x={650} y={600} /><Hole x={787} y={680} />
    {poly([440, 405, 485, 370, 915, 605, 870, 640], C)}
    {poly([870, 640, 915, 605, 915, 622, 870, 652], C, 1.5)}
    <Num x={445} y={420} t="6" /><Num x={706} y={572} t="2" /><Num x={842} y={645} t="1" />
    {/* lower fins */}
    {poly([265, 540, 310, 488, 420, 530, 455, 520, 290, 610], Y, 1.5)}
    {poly([160, 612, 310, 492, 268, 552, 242, 640], P, 2)}
    {poly([130, 612, 168, 548, 310, 468, 430, 520, 310, 492, 160, 612, 160, 625], C, 2)}
    <ellipse cx="262" cy="600" rx="18" ry="28" fill={C} stroke={E} strokeWidth="1.5" />
    <LowerFin i={0} /><LowerFin i={1} /><LowerFin i={2} />
    {/* lower plate */}
    {poly([80, 635, 125, 605, 695, 905, 695, 935, 640, 960], C)}
    <Hole x={155} y={757} rx={44} ry={60} />
    {poly([103, 750, 168, 715, 195, 775, 150, 790, 103, 812], P, 1.5)}
    <Hole x={295} y={840} /><Hole x={430} y={920} /><Hole x={565} y={1000} />
    <Num x={88} y={660} t="6" /><Num x={208} y={735} t="7" /><Num x={488} y={895} t="8" /><Num x={610} y={965} t="5" />
    {/* front panel */}
    {poly([88, 910, 170, 875, 585, 1100, 585, 1130, 170, 905, 125, 915, 88, 935], C, 2)}
    {poly([585, 1065, 620, 1045, 620, 1070, 585, 1090], P, 1.5)}
    <path d="M170 1110V1500" stroke={E} strokeWidth="2" />
    {poly([130, 1020, 145, 1025, 145, 1065, 130, 1058], P, 1.5)}
    {poly([575, 1120, 612, 1105, 612, 1510, 575, 1535], P, 2)}
    {poly([575, 1535, 612, 1517, 690, 1565, 655, 1590], C, 1.5)}
    {[[215, -5], [300, 30], [385, 80], [470, 128], [215, 72], [300, 122], [385, 170], [470, 220], [215, 212], [300, 260], [385, 310], [470, 355], [215, 352], [470, 500]].map(([x, y]) => <Slot key={`${x}_${y}`} x={x} y={y + 1020} />)}
    <Hole x={372} y={1465} rx={30} ry={43} />
    {/* latch */}
    {poly([640, 1610, 790, 1535, 790, 1630, 640, 1700], P, 2)}
    {poly([685, 1590, 770, 1545, 770, 1610, 685, 1655], C, 1.5)}
    {poly([690, 1600, 735, 1575, 735, 1605, 690, 1628], P, 1)}
    {poly([752, 1555, 764, 1548, 764, 1580, 752, 1586], P, 1)}
    {poly([600, 1585, 612, 1580, 612, 1680, 600, 1675], P, 1.5)}
    {poly([575, 1700, 612, 1720, 575, 1745], P, 1.5)}
    {poly([632, 1750, 668, 1770, 632, 1785], P, 1.5)}
    {/* base */}
    {poly([100, 1530, 150, 1500, 150, 1470, 165, 1475, 165, 1520, 175, 1530, 105, 1600], P, 2)}
    {poly([140, 1550, 180, 1525, 630, 1775, 585, 1810, 140, 1575], C, 2)}
    {poly([585, 1810, 650, 1780, 650, 1810, 590, 1840], P, 1.5)}
    <Hole x={158} y={1655} /><Hole x={293} y={1735} /><Hole x={430} y={1812} /><Hole x={567} y={1890} />
    <Num x={88} y={1655} t="12" /><Num x={212} y={1720} t="11" /><Num x={485} y={1880} t="10" /><Num x={612} y={1960} t="9" />
  </ModelSvg>
);

const ViewCube = () => (
  <OverlaySvg width="300" height="300" viewBox="1640 200 300 300">
    <defs>
      <radialGradient id="cubeShade" cx=".5" cy=".5" r=".5"><stop offset="0" stopColor="#3d424e" /><stop offset="1" stopColor="#23283380" /></radialGradient>
    </defs>
    <ellipse cx="1843" cy="288" rx="53" ry="33" fill="none" stroke="#464b57" strokeWidth="13" />
    <ellipse cx="1843" cy="293" rx="40" ry="22" fill="url(#cubeShade)" />
    <polygon points="1843,229 1876,243 1843,263 1811,243" fill="#a6a8ac" stroke="#4c4f57" />
    <polygon points="1811,243 1843,263 1843,300 1814,283" fill="#a4a6aa" stroke="#4c4f57" />
    <polygon points="1843,263 1876,243 1874,283 1843,300" fill="#97999e" stroke="#4c4f57" />
    <g fontFamily="Noto Sans CJK SC" fill="#4c4f57" textAnchor="middle">
      <text transform="translate(1837 250) matrix(.8 -.4 .8 .4 0 0)" fontSize="20">上</text>
      <text transform="translate(1827 283) matrix(1 .5 0 1 0 0)" fontSize="22">后</text>
      <text transform="translate(1859 283) matrix(1 -.5 0 1 0 0)" fontSize="22">左</text>
    </g>
    <g fontFamily="Noto Sans CJK SC" fill="#8e929b" textAnchor="middle">
      <text transform="translate(1802 318) rotate(-30)" fontSize="16">北</text>
      <text transform="translate(1885 318) rotate(30)" fontSize="16">西</text>
      <text transform="translate(1806 266) rotate(30)" fontSize="13">东</text>
      <text transform="translate(1881 266) rotate(-30)" fontSize="13">南</text>
    </g>
    <path d="M1908 375V339" stroke="#2f6eb8" strokeWidth="4" strokeLinecap="round" />
    <path d="M1877 357L1906 374" stroke="#d9736c" strokeWidth="4" strokeLinecap="round" />
    <path d="M1878 393L1908 377" stroke="#55a73f" strokeWidth="4.5" strokeLinecap="round" />
    <text x="1885" y="353" fill="#9c3434" fontSize="17" textAnchor="end" fontFamily="Liberation Sans">X</text>
    <text x="1885" y="389" fill="#2f6b30" fontSize="15" textAnchor="end" fontFamily="Liberation Sans">Y</text>
    <text x="1913" y="335" fill="#2f6eb8" fontSize="17" textAnchor="middle" fontFamily="Liberation Sans">Z</text>
    <path d="M1723 364V452" stroke="#5a58c2" strokeWidth="1.3" />
    <path d="M1673 394L1748 437" stroke="#c85a78" strokeWidth="1" />
    <path d="M1673 452L1748 409" stroke="#5cc77a" strokeWidth="1" />
    <rect x="1720.5" y="419.5" width="5" height="5" fill="none" stroke="#f4f4f4" />
  </OverlaySvg>
);

const Task = ({ children, tone, dot, wide }: any) => (
  <TaskItem $tone={tone}>{children}{dot ? <TaskDot $c={dot} $w={wide ? 13 : 5} /> : <TaskDot $c="transparent" />}</TaskItem>
);
const T24 = ({ children }: any) => <svg width="24" height="24" viewBox="0 0 24 24" style={{ display: "block" }}>{children}</svg>;

export default function App() {
  return (
    <Page>
      <Global />
      <Popup>
        <PopBulb width="14" height="24" viewBox="0 0 14 24"><path d="M7 1C2 1 0 5 1 8 2 11 4 12 4 16H10C10 12 12 11 13 8 14 5 12 1 7 1Z" fill="#e7d98b" stroke="#8f8a68" /><rect x="4" y="16" width="6" height="6" fill="#66676b" /></PopBulb>
        <PopClose>×</PopClose>
        <PopTitle>三维显示性能</PopTitle>
        <PopText>您可以提高三维平移、缩放和动态观察操作的性能。</PopText>
        <PopLink>不再显示此消息</PopLink>
        <PopMore />
      </Popup>

      <TitleBar>
        <QuickBar>
          <Qa $w={14}><svg width="14" height="20" viewBox="0 0 14 20"><path d="M5 1H9L14 19H10L9 14H5L4 19H0Z" fill="#b82a2a" /></svg></Qa>
          <Qa $w={10}><svg width="6" height="14" viewBox="0 0 6 14"><path d="M1 1H5M1 5H5M1 9H5" stroke="#d89a4a" /></svg></Qa>
          <Qa $w={15} />
          {["newf", "open", "save", "saveas", "phone1", "phone2"].map(k => <Qa key={k} $w={k === "phone2" ? 26 : 22}><Ico k={k} s={16} /></Qa>)}
          <Qa $w={24}><Ico k="undo" s={16} /></Qa><Qa $w={8}><Caret /></Qa>
          <Qa $w={22}><Ico k="redo" s={16} /></Qa><Qa $w={12}><Caret /></Qa>
          <Qa $w={26}><Ico k="print" s={17} /></Qa>
          <Qa $w={22}><Ico k="folder" s={16} /></Qa>
          <Qa $w={22}><Ico k="left" s={16} /></Qa>
          <Qa $w={22}><Ico k="right" s={16} /></Qa>
          <Qa $w={22}><Ico k="snake" s={17} /></Qa>
          <Qa $w={24}><Ico k="ruler" s={16} /></Qa>
          <Qa $w={10}><Caret /></Qa>
          <Qa $w={16}><Caret /></Qa>
          <Qa $w={20}><Ico k="send" s={16} /></Qa>
          <Qa $w={30}>共享</Qa>
        </QuickBar>
        <AppTitle>{"AutoCAD Electrical   rxze1m4c_3D.dwg"}</AppTitle>
        <CaretRight />
        <SearchBox>键入关键字或短语</SearchBox>
        <TitleRight>
          <TitleItem $w={22}><Search size={14} color="#c8ccd3" /></TitleItem>
          <TitleItem $w={26}><Ico k="user" s={16} /></TitleItem>
          <TitleItem $w={62}>954452567</TitleItem>
          <TitleItem $w={34}><Caret /></TitleItem>
          <TitleItem $w={12}><ShoppingCart size={13} color="#c8ccd3" /></TitleItem>
          <TitleItem $w={28}><Ico k="aLogo" s={16} /></TitleItem>
          <TitleItem $w={4}><Caret /></TitleItem>
          <TitleItem $w={18} />
          <TitleItem $w={16}><Ico k="help" s={16} /></TitleItem>
          <TitleItem $w={18}><Caret /></TitleItem>
          <TitleItem $w={54} />
          <TitleItem $w={22}><Minus size={11} color="#d4d7dc" /></TitleItem>
          <TitleItem $w={22}><Copy size={11} color="#d4d7dc" /></TitleItem>
          <TitleItem $w={22}><XIcon size={13} color="#d4d7dc" /></TitleItem>
        </TitleRight>
      </TitleBar>

      <TabRow>
        {tabs.map(t => <RTab key={t} $on={t === "原理图"}>{t}</RTab>)}
        <MoreTab><svg width="14" height="9" viewBox="0 0 14 9"><rect width="14" height="9" fill="#d8dbe0" /><rect x="3" y="3" width="5" height="3" fill="#555" /></svg><Caret /></MoreTab>
      </TabRow>

      <Ribbon>
        <RPanel $w={251}>
          <RBody>
            <Big k="menuBig" w={72} lines={["图标菜单"]} caret />
            <Big k="circuit" w={70} lines={["回路编译器"]} caret />
            <SmallCol $pad={2}>
              <SmallRow><Sm k="coil" w={36} caret /><Sm k="panelB" w={32} caret /><Sm k="blockB" w={36} caret /></SmallRow>
              <SmallRow><Sm k="tableB" w={36} caret /><Sm k="nodeB" w={32} caret /><Sm k="branch" w={36} caret /></SmallRow>
            </SmallCol>
          </RBody>
          <RLabel>插入元件 <Caret /></RLabel>
        </RPanel>
        <RPanel $w={161}>
          <RBody>
            <Big k="editBig" w={48} lines={["编辑"]} caret />
            <SmallCol $pad={2}>
              <SmallRow><Sm k="compX" w={20} /><Sm k="move" w={32} caret /><Sm k="swap" w={26} /><Sm k="cone" w={29} caret /></SmallRow>
              <SmallRow><Sm k="nodes" w={20} /><Sm k="rotate" w={32} caret /><Sm k="arcTool" w={26} /><Sm k="cubeX" w={29} caret /></SmallRow>
              <SmallRow><Sm k="tableBlue" w={29} caret /><Sm k="tag" w={40} caret /></SmallRow>
            </SmallCol>
          </RBody>
          <RLabel>编辑元件 <Caret /></RLabel>
        </RPanel>
        <RPanel $w={138}>
          <RBody>
            <Big k="clip" w={42} lines={["粘贴"]} />
            <SmallCol $pad={2} $left={-3}>
              <TextTool><Ico k="scissors" s={18} />剪切</TextTool>
              <TextTool><Ico k="copySel" s={18} />复制选定对象</TextTool>
            </SmallCol>
          </RBody>
          <RLabel>回路剪贴板</RLabel>
        </RPanel>
        <RPanel $w={234}>
          <RBody>
            <Big k="wire" w={50} lines={["导线"]} caret />
            <Big k="bus" w={30} lines={["多", "母线"]} />
            <Big k="wireNo" w={44} lines={["线", "号"]} />
            <Big k="source" w={34} lines={["源", "箭头"]} />
            <SmallCol $pad={2}>
              <SmallRow><Sm k="lineCol" w={36} caret /><Sm k="gapWire" w={36} caret /></SmallRow>
              <SmallRow><Sm k="earth" w={36} caret /><Sm k="tee" w={36} caret /></SmallRow>
            </SmallCol>
          </RBody>
          <RLabel>插入导线/线号</RLabel>
        </RPanel>
        <RPanel $w={220}>
          <RBody>
            <Big k="editWire" w={58} lines={["编辑线", "号"]} />
            <Big k="trim" w={32} lines={["修剪", "导线"]} />
            <SmallCol $pad={2}>
              <SmallRow><Sm k="noX" w={26} /><Sm k="lineAdd" w={30} caret /><Sm k="wirePen" w={34} caret /><Sm k="noBlue" w={34} caret /></SmallRow>
              <SmallRow><Sm k="noPlus" w={26} /><Sm k="wireDot" w={30} caret /><Sm k="noTri" w={30} /><Sm k="ladder" w={12} /></SmallRow>
            </SmallCol>
          </RBody>
          <RLabel>编辑导线/线号 <Caret /></RLabel>
        </RPanel>
        <RPanel $w={105} $last>
          <RBody>
            <SmallCol $pad={2}>
              <TextTool><Ico k="symEdit" s={18} />符号编译器<CaretGap /><Caret /></TextTool>
              <TextTool><Ico k="wizard" s={18} />图标菜单 向导</TextTool>
              <TextTool><Ico k="props" s={18} />图形 特性<CaretGap /><Caret /></TextTool>
            </SmallCol>
          </RBody>
          <RLabel>其他工具 <Caret /></RLabel>
        </RPanel>
      </Ribbon>

      <DocBar>
        <DocTab $w={114}>开始</DocTab>
        <DocTab $w={120} $on>rxze1m4c_3D*<XIcon size={11} color="#a8adb6" /></DocTab>
        <DocPlus><Plus size={11} /></DocPlus>
      </DocBar>
      <Band />

      <Main>
        <Side>
          <SideMain>
            <SideHead><HeadGrip />项目管理器</SideHead>
            <SideTools>
              {["pFolderOpen", "pFolderAdd", "pStar", "pRefresh", "pDoc", "pFolderRef", "pDocs", "pPrint"].map(k => <Ico key={k} k={k} s={18} />)}
              <Caret />
              <Ico k="halfDisc" s={16} />
            </SideTools>
            <Project>四川思立可<Caret $c="#c8ccd3" /></Project>
            <TreeHead>项目<Caret $c="#d8dbe0" /></TreeHead>
            <TreeWrap>
              <TreeBody>
                {files1.map(f => <FileRow key={f} name={f} />)}
                {folders.map((f, i) => <FolderRow key={f} name={f} open={i === folders.length - 1} />)}
                {files2.map(f => <FileRow key={f} name={f} sel={f === "压辊机.dwg"} />)}
              </TreeBody>
              <VTrack><VThumb /></VTrack>
              <HTrack><HThumb /></HTrack>
            </TreeWrap>
            <Details>详细信息<DetailIcons><Ico k="pDoc" s={13} /><Ico k="pDoc" s={13} /><CaretLeft /></DetailIcons></Details>
          </SideMain>
          <SideRail>
            <VText>项目</VText>
            <RailTab><VText>位置代号视图</VText></RailTab>
          </SideRail>
        </Side>
        <View>
          <Canvas>
            <ViewLabel>[−][西北等轴测][概念]</ViewLabel>
            <ViewCtl><Minus size={11} /><Copy size={10} /><XIcon size={12} /></ViewCtl>
            <Model />
            <ViewCube />
            <Wcs>WCS<Caret $c="#a4a8b2" /></Wcs>
          </Canvas>
          <Cmd>
            <CmdRail>
              <Grip />
              <XIcon size={13} color="#e0e2e6" strokeWidth={3} />
              <Wrench size={14} color="#e0e2e6" fill="#e0e2e6" />
            </CmdRail>
            <CmdMain>
              <CmdHist>{"输入选项 [二维线框(2)/线框(W)/隐藏(H)/真实(R)/概念(C)/着色(S)/带边缘着色(E)/灰度(G)/勾画(SK)/X 射线(X)/其他(O)] <二维线框>: _c\n命令:"}</CmdHist>
              <CmdInput>
                <svg width="15" height="13" viewBox="0 0 15 13"><rect x=".5" y=".5" width="14" height="12" fill="#e8e8e8" stroke="#555" /><rect x="1" y="1" width="13" height="3" fill="#666" /></svg>
                <Caret $c="#555" />
                <CmdHint>键入命令</CmdHint>
              </CmdInput>
            </CmdMain>
          </Cmd>
        </View>
      </Main>

      <Status>
        <LTab $w={45} $on>模型</LTab>
        <LTab $w={62}>Layout1</LTab>
        <LTab $w={62}>Layout2</LTab>
        <LTab $w={20}><Plus size={11} /></LTab>
        <StatusTools>
          <SGroup $w={27}>模型</SGroup>
          <SGroup $w={61}>
            <SBtn><Ico k="gridLines" s={16} /></SBtn>
            <SBtn><Ico k="gridDots" s={14} /></SBtn>
            <SBtn $w={12}><Caret /></SBtn>
          </SGroup>
          <SGroup $w={157} $flow>
            <SBtn $w={22}><Ico k="ortho" s={17} /></SBtn>
            <SBtn $w={22}><Ico k="polar" s={16} /></SBtn>
            <SBtn $w={14}><Caret /></SBtn>
            <SBtn $w={26}><Ico k="snap" s={16} /></SBtn>
            <SBtn $w={15}><Caret /></SBtn>
            <SBtn $on $w={21}><Ico k="iso" s={17} /></SBtn>
            <SBtn $on $w={22}><Ico k="square" s={17} /></SBtn>
            <SBtn $w={14}><Caret /></SBtn>
          </SGroup>
          <SGroup $w={100} $flow>
            <SBtn $w={2} />
            <SBtn $on $w={22}><Ico k="anno1" s={17} /></SBtn>
            <SBtn $w={20}><Ico k="anno2" s={17} /></SBtn>
            <SBtn $w={28}><Ico k="anno" s={17} /></SBtn>
            <SBtn $w={18}>1:1</SBtn>
            <SBtn $w={10}><Caret /></SBtn>
          </SGroup>
          <SGroup $w={37}><Settings size={15} fill="#c2c6cd" color="#c2c6cd" /><Caret /></SGroup>
          <SGroup $w={23}><Plus size={17} /></SGroup>
          <SGroup $w={22}><Ico k="symsIcon" s={16} /></SGroup>
          <SGroup $w={78}><Ico k="dbOk" s={17} /><Ico k="warn" s={18} /><Ico k="chart" s={17} /></SGroup>
          <SGroup $w={46}><Ico k="expand" s={16} /><Menu size={17} /></SGroup>
        </StatusTools>
      </Status>

      <Taskbar>
        <div />
        <TaskItems>
          <Task><T24><path d="M2 2H11.5V11.5H2ZM12.5 2H22V11.5H12.5ZM2 12.5H11.5V22H2ZM12.5 12.5H22V22H12.5Z" fill="#41b6ee" /></T24></Task>
          <Task><T24><circle cx="14" cy="10" r="7.5" fill="#26304e" stroke="#e4e7ec" strokeWidth="2.2" /><path d="M8 16L4 21" stroke="#e4e7ec" strokeWidth="2.4" /></T24></Task>
          <Task><T24><rect x="2" y="9" width="13" height="13" fill="#777" /><rect x="9" y="2" width="13" height="13" fill="#e8e8e8" /><rect x="9" y="9" width="6" height="6" fill="#aaa" /></T24></Task>
          <Task><T24><rect x="2" y="2" width="20" height="20" rx="2" fill="#1a6fa8" /><rect x="5" y="4" width="7" height="16" fill="#f2f4f7" /><rect x="14" y="4" width="5" height="9" fill="#7fd0f5" /></T24></Task>
          <Task><T24><path d="M12 1C5 1 3 6 3 12 3 17 5 22 8 23V20C14 21 21 18 21 11 21 5 17 1 12 1Z" fill="#6f6fc9" /><rect x="7" y="8" width="7" height="7" rx="1" fill="#eef" /><path d="M15 10L18 8V15L15 13Z" fill="#eef" /></T24></Task>
          <Task dot="#93a2b8"><T24><path d="M1 3H10L12 6H23V21H1Z" fill="#f3c33f" /><rect x="1" y="10" width="22" height="11" fill="#fbd75a" /><rect x="6" y="15" width="12" height="6" fill="#2a76b5" /></T24></Task>
          <Task dot="#93a2b8"><T24><circle cx="12" cy="12" r="11" fill="#1c8ecf" /><path d="M8 16C5 8 14 5 19 9 22 12 19 16 15 14 12 13 13 10 16 11 12 7 7 11 8 16Z" fill="#59d39c" /><path d="M8 16C9 21 16 23 21 18 16 20 11 19 8 16Z" fill="#0c3a6b" /></T24></Task>
          <Task><T24><path d="M3 7H21V22H3Z" fill="#f3f4f6" /><path d="M8 7V4C8 1 16 1 16 4V7" stroke="#3b8ad0" fill="none" strokeWidth="1.6" /><rect x="7" y="10" width="4" height="4" fill="#e9573f" /><rect x="12" y="10" width="4" height="4" fill="#6abf45" /><rect x="7" y="15" width="4" height="4" fill="#36a3e6" /><rect x="12" y="15" width="4" height="4" fill="#f3c33f" /></T24></Task>
          <Task tone="#3d2729" dot="#e48a8a"><T24><circle cx="9" cy="12" r="9" fill="#e8e0dc" /><rect x="3" y="4" width="9" height="9" fill="#c92e2e" /><rect x="13" y="7" width="9" height="13" fill="#ece8e4" /><rect x="6" y="15" width="8" height="5" fill="#c92e2e" /></T24></Task>
          <Task tone="#1d2c55" dot="#5cb0ea" wide><T24><rect x="2" y="1" width="20" height="22" fill="#f4e8e6" /><path d="M12 2L19 18H15L14 14H10L9 18H5Z" fill="#c8242c" /></T24></Task>
          <Task dot="#93a2b8"><T24><rect x="2" y="2" width="20" height="20" rx="3" fill="#a5131a" /><path d="M5 18C9 14 12 8 11 5 10 3 9 5 11 10 13 14 17 16 20 15 16 14 10 15 5 18Z" fill="none" stroke="#fff" strokeWidth="1.3" /></T24></Task>
          <Task dot="#93a2b8"><T24><circle cx="13" cy="8" r="6" fill="#3f7fd0" /><path d="M3 12C6 6 9 5 12 5 8 8 7 11 8 14Z" fill="#d9a13d" /><path d="M8 11H20L14 22Z" fill="#3cae4f" /></T24></Task>
          <Task tone="#3d2729" dot="#e48a8a"><T24><ellipse cx="9" cy="10" rx="8" ry="7" fill="#36c45a" /><ellipse cx="16" cy="15" rx="7" ry="6" fill="#eef0ea" /><circle cx="6" cy="8" r="1.2" fill="#154" /><circle cx="12" cy="8" r="1.2" fill="#154" /></T24></Task>
          <Task dot="#93a2b8"><T24><rect x="1" y="1" width="22" height="22" rx="2" fill="#63b52d" /><path d="M16 5H8V19H16" stroke="#e7f6cf" strokeWidth="3.2" fill="none" /></T24></Task>
          <Task dot="#93a2b8"><T24><rect x="1" y="1" width="22" height="22" rx="2" fill="#e4564a" /><path d="M16 5H8V19H16" stroke="#f9dcd6" strokeWidth="3.2" fill="none" /></T24></Task>
          <Task dot="#93a2b8"><T24><rect x="3" y="2" width="18" height="6" fill="#8b3f97" /><rect x="3" y="8" width="18" height="7" fill="#47924a" /><rect x="3" y="15" width="18" height="7" fill="#b34141" /><rect x="9" y="2" width="5" height="20" fill="#d9b45a" /></T24></Task>
        </TaskItems>
        <Tray>
          <TrayItem $w={18}><ChevronUp size={14} /></TrayItem>
          <TrayItem><svg width="15" height="10" viewBox="0 0 15 10"><path d="M3 10C0 10 0 6 3 6 3 2 9 1 10 5 14 4 15 10 12 10Z" fill="#e2e4e8" /></svg></TrayItem>
          <TrayItem><svg width="13" height="13"><circle cx="6.5" cy="6.5" r="6" fill="#2f9be0" /><circle cx="6.5" cy="6.5" r="2.5" fill="#c7e6f8" /></svg></TrayItem>
          <TrayItem><svg width="15" height="13"><ellipse cx="5.5" cy="5" rx="5" ry="4.5" fill="#3cc261" /><ellipse cx="10" cy="8" rx="4.5" ry="4" fill="#e6e8e6" /></svg></TrayItem>
          <TrayItem><svg width="12" height="14"><ellipse cx="6" cy="7" rx="5" ry="6" fill="#191a1f" /><ellipse cx="6" cy="10" rx="3.5" ry="3.5" fill="#f0f0f0" /><path d="M1 8H11" stroke="#d63a2a" strokeWidth="1.4" /></svg></TrayItem>
          <TrayItem><svg width="14" height="16"><rect width="14" height="16" fill="#e8503e" /><path d="M10 4H4V8H10V12H4" stroke="#fff" strokeWidth="2" fill="none" /></svg></TrayItem>
          <TrayItem><svg width="14" height="16"><path d="M7 0L14 3V9C14 13 10 15 7 16 4 15 0 13 0 9V3Z" fill="#2b7fc0" /><circle cx="9" cy="11" r="3.5" fill="#3aa74c" /></svg></TrayItem>
          <TrayItem><svg width="14" height="14"><rect width="14" height="14" rx="2" fill="#26b3c6" /><path d="M3 5H11M7 5V11" stroke="#fff" strokeWidth="2" /></svg></TrayItem>
          <TrayItem><svg width="15" height="13"><circle cx="8" cy="5" r="4" fill="#3f7fd0" /><path d="M0 8H11L6 13Z" fill="#3cae4f" /></svg></TrayItem>
          <TrayItem><Mic size={16} color="#7fb2d9" /></TrayItem>
          <TrayItem $w={38} $big>英</TrayItem>
          <TrayItem $w={24}><Wifi size={15} /></TrayItem>
          <TrayItem $w={20}><Volume1 size={15} /></TrayItem>
          <TrayItem $w={24}><svg width="15" height="13"><rect x="1" y="2" width="11" height="9" rx="1" fill="#e2e4e8" /><rect x="5" y="0" width="3" height="2" fill="#e2e4e8" /><rect x="12" y="4" width="2" height="5" fill="#e2e4e8" /></svg></TrayItem>
          <Clock><span>15:44</span><span>2021/11/1</span></Clock>
          <TrayItem $w={18}><Moon size={14} /></TrayItem>
        </Tray>
      </Taskbar>
    </Page>
  );
}
